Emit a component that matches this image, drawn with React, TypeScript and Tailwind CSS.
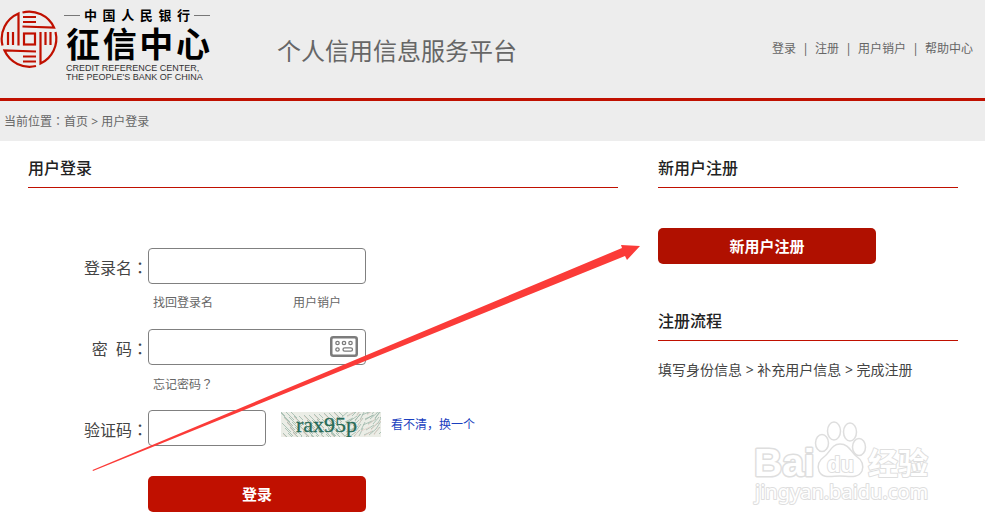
import React from 'react';

const sans = "font-['Noto_Sans','Noto_Sans_CJK_SC',sans-serif]";

function Spread({ text, className }: { text: string; className: string }) {
  return (
    <span className={`flex justify-between ${className}`}>
      {text.split('').map((c, i) => (
        <span key={i}>{c}</span>
      ))}
    </span>
  );
}

/* Punctuation centred in its full-width cell */
function Mark({ children }: { children: string }) {
  return <span lang="zh-TW" className="font-['Noto_Sans_CJK_TC',sans-serif]">{children}</span>;
}

function Emblem() {
  return (
    <svg className="h-16 w-[60px] shrink-0" viewBox="0 0 60 64" fill="none" stroke="#c01000" strokeWidth="2.200" aria-hidden="true">
      <path d="M22.500 5.500A27.500 27.500 0 0 1 54 20.500L22.500 19.500" />
      <path d="M23 10H36M23 15H36" />
      <path d="M18.500 38.500V6.500A27.500 27.500 0 0 0 2.500 38.500" />
      <path d="M8 25V38M13 25V38" />
      <path d="M36 59A27.500 27.500 0 0 1 4.500 43.500L36 44.500" />
      <path d="M23 49.500H36M23 54.500H36" />
      <path d="M40.500 25V56.500A27.500 27.500 0 0 0 55.500 25" />
      <path d="M45.500 25V38M50.500 25V38" />
      <rect x="24" y="26.500" width="11" height="11" />
    </svg>
  );
}

function KeyboardIcon() {
  return (
    <svg className="h-[21px] w-7" viewBox="0 0 28 21" fill="none" stroke="#7c7c7c" aria-hidden="true">
      <rect x="1.250" y="1.250" width="25.500" height="18.500" rx="2" strokeWidth="2.500" />
      <g strokeWidth="1.300">
        <circle cx="7.500" cy="7" r="1.700" />
        <circle cx="14" cy="7" r="1.700" />
        <circle cx="20.500" cy="7" r="1.700" />
        <circle cx="7.500" cy="13.500" r="1.700" />
        <rect x="13" y="11.900" width="9.500" height="3.300" rx="1.650" />
      </g>
    </svg>
  );
}

function Captcha() {
  const strokes = Array.from({ length: 150 }, (_, i) => {
    const x = (i * 37) % 101;
    const y = (i * 17) % 26;
    const dx = 4 + ((i * 7) % 6);
    const dy = x > 60 ? -4 - (i % 5) : 4 + (i % 6);
    return `M${x} ${y}l${dx} ${dy}`;
  });
  return (
    <svg className="h-[25px] w-[100px] shrink-0" viewBox="0 0 100 25" role="img" aria-label="验证码">
      <rect width="100" height="25" fill="#ebede6" />
      <path d={strokes.slice(0, 110).join('')} stroke="#9db8ab" strokeWidth="0.800" />
      <path d={strokes.slice(110).join('')} stroke="#e3cfc8" strokeWidth="0.800" />
      <text x="15" y="20" fontSize="22" fill="#286b58" stroke="#286b58" strokeWidth="0.300" className="font-['Liberation_Serif',serif]">
        rax95p
      </text>
    </svg>
  );
}

function Watermark() {
  return (
    <svg
      className="pointer-events-none absolute top-[418px] left-[750px] h-[90px] w-[185px]"
      viewBox="0 0 185 90"
      fill="#fff"
      stroke="#dedede"
      strokeWidth="1.500"
      strokeLinejoin="round"
      aria-hidden="true"
    >
      <g className="font-['Liberation_Sans','Noto_Sans_CJK_SC',sans-serif]">
        <text x="4" y="58" fontSize="39" fontWeight="700" strokeWidth="3" paintOrder="stroke">Bai</text>
        <ellipse cx="72" cy="25" rx="6.500" ry="8.500" />
        <ellipse cx="84" cy="13" rx="6.500" ry="9" />
        <ellipse cx="100" cy="14" rx="6.500" ry="9" />
        <ellipse cx="109" cy="29" rx="6.500" ry="8.500" />
        <path d="M90 26C82 26 80 34 75 38C68 43 67 48 69 53C72 61 82 58 90 58C98 58 108 61 112 53C114 47 112 42 106 38C101 34 99 26 90 26Z" />
        <text x="77" y="54" fontSize="22" fontWeight="700" strokeWidth="2" paintOrder="stroke">du</text>
        <text x="118" y="56" fontSize="30" fontWeight="700" strokeWidth="2" paintOrder="stroke">经验</text>
      </g>
      <text x="5" y="81" fontSize="20" strokeWidth="2" paintOrder="stroke" className="font-['Noto_Sans',sans-serif]">jingyan.baidu.com</text>
    </svg>
  );
}

function Arrow() {
  return (
    <svg className="pointer-events-none absolute top-[240px] left-[90px] h-[234px] w-[552px]" viewBox="0 0 552 234" fill="#fb3b38" aria-hidden="true">
      <path d="M2.500 230L532 8L531 5L550 6L537 20L535 16L3 231Z" />
    </svg>
  );
}

const input = 'h-9 rounded-[4px] border border-[#808080] bg-white px-2 text-base outline-none';
const label = 'w-[148px] shrink-0 pt-0.5 text-right text-base text-[#444]';
const heading = 'border-b border-[#c01000] pt-4 pb-[7px] text-base leading-[23px] font-medium text-[#222]';
const sub = 'text-xs leading-4 text-[#666]';

export default function App() {
  const nav = ['登录', '注册', '用户销户', '帮助中心'];
  return (
    <div className={`relative min-h-screen bg-white ${sans}`}>
      <header className="flex h-[101px] items-start border-b-[3px] border-[#c01000] bg-[#ededed]">
        <div className="flex w-[277px] shrink-0 pt-[7px]">
          <Emblem />
          <div className="w-[150px] pl-1 text-black">
            <div className="flex h-[17px] items-center gap-1">
              <span className="h-px w-4 shrink-0 bg-[#777]" />
              <Spread text="中国人民银行" className="grow text-[13px] leading-[17px] font-bold" />
              <span className="h-px w-4 shrink-0 bg-[#777]" />
            </div>
            <Spread text="征信中心" className="pl-0.5 text-[34px] leading-10 font-bold" />
            <div className="pl-0.5 font-['Liberation_Sans',sans-serif] text-[9px] leading-[9px] whitespace-nowrap text-[#333]">
              <div>CREDIT REFERENCE CENTER,</div>
              <div>THE PEOPLE'S BANK OF CHINA</div>
            </div>
          </div>
        </div>
        <h1 className="pt-[33px] text-2xl leading-9 whitespace-nowrap text-[#666]">个人信用信息服务平台</h1>
        <nav className="ml-auto flex pt-[41px] pr-3 text-xs leading-4 whitespace-nowrap text-[#666]">
          {nav.map((n, i) => (
            <React.Fragment key={n}>
              {i > 0 && <span className="w-[19px] text-center">|</span>}
              <a href="#">{n}</a>
            </React.Fragment>
          ))}
        </nav>
      </header>
      <div className="h-10 bg-[#ededed] pt-3 pl-1 text-xs leading-4 text-[#666]">
        当前位置<Mark>：</Mark><a href="#">首页</a> &gt; <a href="#">用户登录</a>
      </div>
      <main className="flex gap-10 pr-[27px] pl-7">
        <section className="min-w-0 grow">
          <h2 className={heading}>用户登录</h2>
          <form className="-ml-7 pt-[60px]" onSubmit={(e) => e.preventDefault()}>
            <div className="flex items-center">
              <label htmlFor="name" className={label}>登录名<Mark>：</Mark></label>
              <input id="name" className={`${input} w-[218px]`} />
            </div>
            <div className="flex h-[45px] items-start gap-20 pt-[11px] pl-[153px]">
              <a href="#" className={sub}>找回登录名</a>
              <a href="#" className={sub}>用户销户</a>
            </div>
            <div className="flex items-center">
              <label htmlFor="pwd" className={label}>密&nbsp;&nbsp;码<Mark>：</Mark></label>
              <div className="relative">
                <input id="pwd" type="password" className={`${input} w-[218px]`} />
                <button type="button" aria-label="软键盘" className="absolute top-[7px] right-2">
                  <KeyboardIcon />
                </button>
              </div>
            </div>
            <div className="flex h-[45px] items-start pt-[11px] pl-[153px]">
              <a href="#" className={sub}>忘记密码<Mark>？</Mark></a>
            </div>
            <div className="flex items-center">
              <label htmlFor="code" className={label}>验证码<Mark>：</Mark></label>
              <input id="code" className={`${input} w-[118px]`} />
              <div className="flex items-center pb-2 pl-[15px]">
                <Captcha />
                <a href="#" className="pt-0.5 pl-2.5 text-xs leading-4 text-[#1a3fc0]">看不清，换一个</a>
              </div>
            </div>
            <button className="mt-[30px] ml-[148px] block h-9 w-[218px] rounded-[5px] bg-[#c01000] text-[15px] font-bold text-white">登录</button>
          </form>
        </section>
        <aside className="w-[300px] shrink-0">
          <h2 className={heading}>新用户注册</h2>
          <button className="mt-10 block h-9 w-[218px] rounded-[5px] bg-[#b01000] text-[15px] font-bold text-white">新用户注册</button>
          <h2 className={`${heading} mt-[30px]`}>注册流程</h2>
          <p className="pt-[19px] text-sm leading-5 whitespace-nowrap text-[#444]">填写身份信息 &gt; 补充用户信息 &gt; 完成注册</p>
        </aside>
      </main>
      <Watermark />
      <Arrow />
    </div>
  );
}
